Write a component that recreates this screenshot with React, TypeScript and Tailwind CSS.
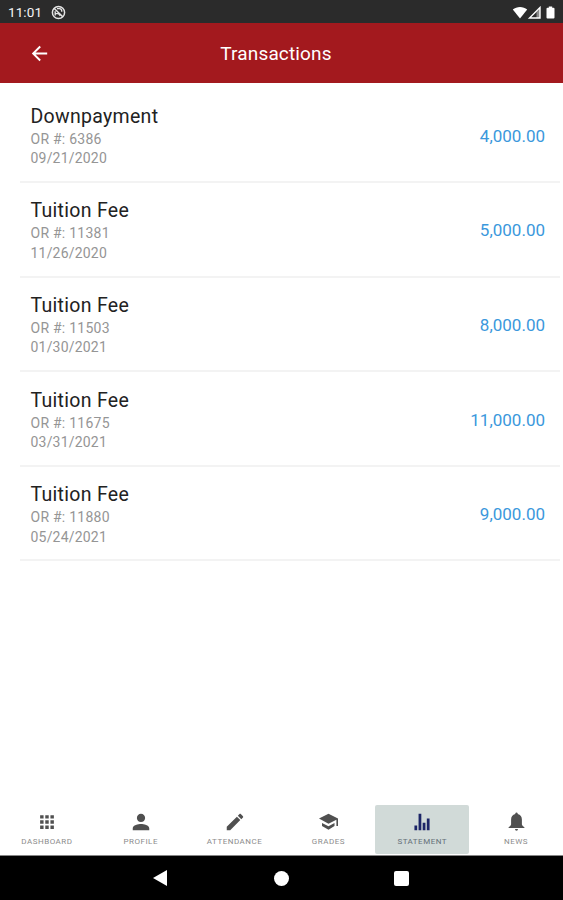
import React from "react";
import { IoMdApps, IoMdArrowBack, IoMdCreate, IoMdPerson, IoMdStats } from "react-icons/io";

type Transaction = { title: string; receipt: string; date: string; amount: string };

const transactions: Transaction[] = [
  { title: "Downpayment", receipt: "6386", date: "09/21/2020", amount: "4,000.00" },
  { title: "Tuition Fee", receipt: "11381", date: "11/26/2020", amount: "5,000.00" },
  { title: "Tuition Fee", receipt: "11503", date: "01/30/2021", amount: "8,000.00" },
  { title: "Tuition Fee", receipt: "11675", date: "03/31/2021", amount: "11,000.00" },
  { title: "Tuition Fee", receipt: "11880", date: "05/24/2021", amount: "9,000.00" },
];

function CapIcon({ className }: { className?: string }) {
  return (
    <svg className={className} viewBox="0 0 22 22" fill="currentColor">
      <path d="M2 7.500 11.500 2.800 21 7.500V15H19.400V8.800L11.500 12.700Z" />
      <path d="M5 12 11.500 15.300 17.500 12V15L11.500 18.800 5 15Z" />
    </svg>
  );
}

function BellIcon({ className }: { className?: string }) {
  return (
    <svg className={className} viewBox="0 0 22 22" fill="currentColor">
      <path d="M11.500 1.600a1.200 1.200 0 0 1 1.200 1.500C15.500 3.700 16.900 5.800 16.900 8.500V13.500Q17.300 15.200 19.400 16.200V17H3.600V16.200Q5.700 15.200 6.100 13.500V8.500C6.100 5.800 7.500 3.700 10.300 3.100A1.200 1.200 0 0 1 11.500 1.600Z" />
      <path d="M10 18h3a1.500 1.800 0 0 1-3 0Z" />
    </svg>
  );
}

const tabs = [
  { label: "DASHBOARD", Icon: IoMdApps },
  { label: "PROFILE", Icon: IoMdPerson },
  { label: "ATTENDANCE", Icon: IoMdCreate },
  { label: "GRADES", Icon: CapIcon },
  { label: "STATEMENT", Icon: IoMdStats, active: true },
  { label: "NEWS", Icon: BellIcon },
];

function StatusBar() {
  return (
    <div className="flex h-[23px] shrink-0 items-center bg-[#2b2b2b] pt-px pl-2 pr-[7px] text-white">
      <span className="pt-px text-[13.5px] leading-none tracking-[0.1px] text-[#f4f4f4]">11:01</span>
      <svg className="ml-[9px] h-[15px] w-[15px]" viewBox="0 0 15 15" fill="none" stroke="#e4e4e4">
        <circle cx="7.5" cy="7.5" r="6.1" strokeWidth="1.5" />
        <path d="M3 3.2 12 12" strokeWidth="1.5" />
        <path d="M6 3.6h2.4a2.4 2.4 0 0 1 2.2 3.2M4.2 6.3v4.2M4.2 8.6h3.2l2 2.2" strokeWidth="1.4" />
      </svg>
      <svg className="ml-auto h-[13px] w-[44px]" viewBox="0 0 44 13" fill="#fff">
        <path d="M.8 3.6C4.7.2 11.300.2 15.200 3.600L8 12.400Z" />
        <path d="M28 1.500V12H17.500Z" fill="none" stroke="#fff" strokeWidth="1.400" />
        <path d="M24.500 6 28 2.500V12H24.500Z" fillOpacity=".45" />
        <path d="M36.800.5h3.400v1.200h1.300a1 1 0 0 1 1 1v8.800a1 1 0 0 1-1 1h-6a1 1 0 0 1-1-1V2.700a1 1 0 0 1 1-1h1.300Z" />
      </svg>
    </div>
  );
}

function Header() {
  return (
    <header className="grid h-[60px] shrink-0 grid-cols-[80px_1fr_91px] items-center bg-[#a3191e] text-white">
      <button aria-label="Back" className="flex justify-center pr-px">
        <IoMdArrowBack className="h-[23px] w-[23px]" />
      </button>
      <h1 className="pt-0.5 text-center text-[19px] leading-6 tracking-[0.15px] text-white">Transactions</h1>
    </header>
  );
}

function TransactionRow({ title, receipt, date, amount }: Transaction) {
  return (
    <li className="ml-5 mr-[3px] flex h-[94.6px] items-center justify-between border-b-2 border-[#f3f3f3] pt-px pl-[10.5px] pr-[15px]">
      <div className="pt-[2px]">
        <h2 className="text-[19.5px] leading-[25px] tracking-[0.3px] text-[#222]">{title}</h2>
        <p className="pt-px text-[14px] leading-[19.5px] tracking-[0.25px] text-[#959595]">OR #: {receipt}</p>
        <p className="text-[14px] leading-[19.5px] tracking-[0.2px] text-[#959595]">{date}</p>
      </div>
      <span className="pt-px text-[17px] leading-6 text-[#3b98dc]">{amount}</span>
    </li>
  );
}

function TabBar() {
  return (
    <nav className="grid h-[50px] shrink-0 grid-cols-6 pb-px">
      {tabs.map(({ label, Icon, active }) => (
        <button
          key={label}
          className={
            active
              ? "flex flex-col items-center rounded-xs bg-[#d1dad8] pt-[6px] text-[#1c2567]"
              : "flex flex-col items-center pt-[6px] text-[#505050]"
          }
        >
          <Icon className="h-[22px] w-[22px]" />
          <span
            className={
              active
                ? "mt-[4px] text-[8px] leading-[10px] tracking-[0.5px] text-[#657078]"
                : "mt-[4px] text-[8px] leading-[10px] tracking-[0.5px] text-[#8c8c8c]"
            }
          >
            {label}
          </span>
        </button>
      ))}
    </nav>
  );
}

function SystemNavigation() {
  return (
    <div className="flex h-[45px] shrink-0 items-center border-t border-[#858585] bg-black pl-[153px]">
      <svg className="h-4 w-[14px]" viewBox="0 0 14 16" fill="#fff">
        <path d="M14 0v16L0 8Z" />
      </svg>
      <span className="ml-[107px] h-[15px] w-[15px] rounded-full bg-white" />
      <span className="ml-[105px] h-[15px] w-[15px] rounded-[2px] bg-white" />
    </div>
  );
}

export default function App() {
  return (
    <div className="flex h-[900px] w-[563px] flex-col overflow-hidden bg-white font-['Roboto',sans-serif]">
      <StatusBar />
      <Header />
      <ul className="flex-1 pt-[5.5px]">
        {transactions.map((transaction) => (
          <TransactionRow key={transaction.receipt} {...transaction} />
        ))}
      </ul>
      <TabBar />
      <SystemNavigation />
    </div>
  );
}
